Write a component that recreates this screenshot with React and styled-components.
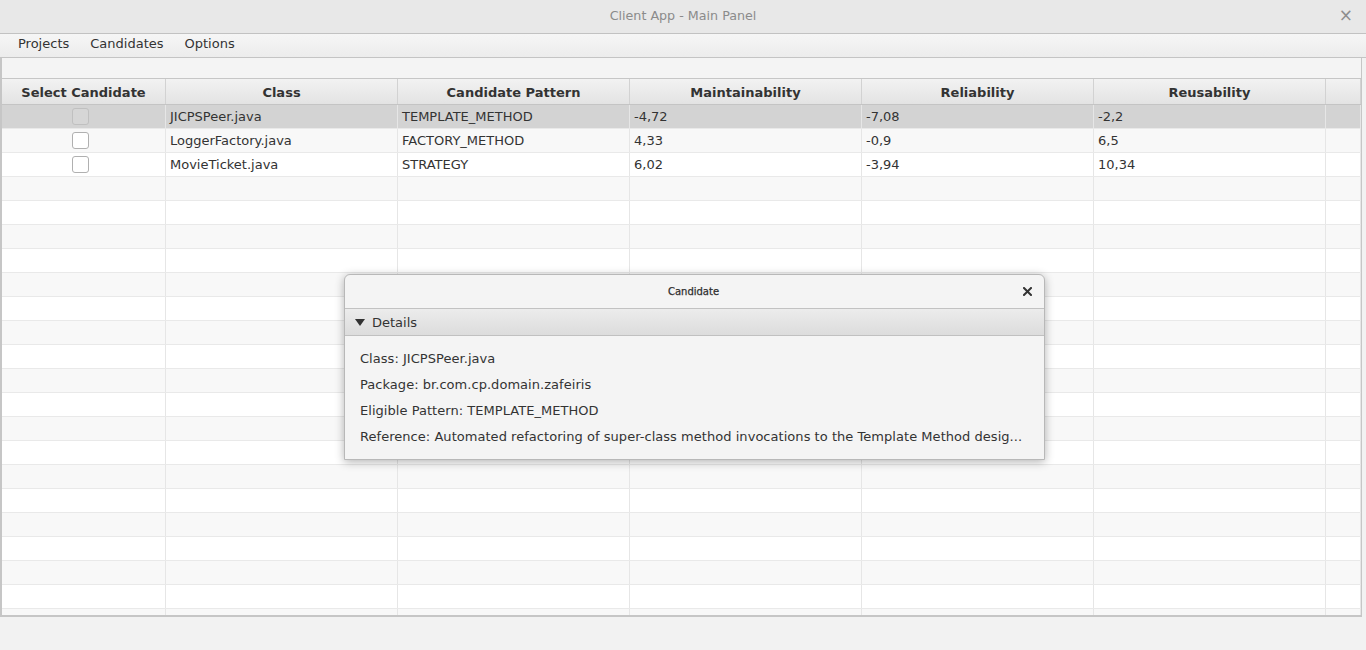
import React from 'react';
import styled, { createGlobalStyle } from 'styled-components';

const GlobalStyle = createGlobalStyle`
  html, body { margin: 0; padding: 0; }
  body {
    font-family: "DejaVu Sans", "Liberation Sans", sans-serif;
    background: #f2f2f2;
    overflow: hidden;
  }
`;

const columns = [
  { title: 'Select Candidate', width: 164 },
  { title: 'Class', width: 232 },
  { title: 'Candidate Pattern', width: 232 },
  { title: 'Maintainability', width: 232 },
  { title: 'Reliability', width: 232 },
  { title: 'Reusability', width: 232 },
];

const rows = [
  ['JICPSPeer.java', 'TEMPLATE_METHOD', '-4,72', '-7,08', '-2,2'],
  ['LoggerFactory.java', 'FACTORY_METHOD', '4,33', '-0,9', '6,5'],
  ['MovieTicket.java', 'STRATEGY', '6,02', '-3,94', '10,34'],
];

const details = [
  'Class: JICPSPeer.java',
  'Package: br.com.cp.domain.zafeiris',
  'Eligible Pattern: TEMPLATE_METHOD',
  'Reference: Automated refactoring of super-class method invocations to the Template Method desig...',
];

export default function App() {
  const bodyRows = Array.from({ length: 22 }, (_, i) => rows[i] || null);
  return (
    <>
      <GlobalStyle />
      <Window>
        <TitleBar>
          <Title>Client App - Main Panel</Title>
          <WinClose>×</WinClose>
        </TitleBar>
        <MenuBar>
          <MenuItem>Projects</MenuItem>
          <MenuItem>Candidates</MenuItem>
          <MenuItem>Options</MenuItem>
        </MenuBar>
        <Content>
          <Spacer />
          <Table>
            <HeaderRow>
              {columns.map((c) => (
                <HeadCell key={c.title} $w={c.width}>{c.title}</HeadCell>
              ))}
              <HeadFiller />
            </HeaderRow>
            <Body>
              {bodyRows.map((r, i) => (
                <Row key={i} $odd={i % 2 === 1} $selected={i === 0}>
                  <Cell $w={columns[0].width} $center>
                    {r && <CheckBox $selected={i === 0} />}
                  </Cell>
                  {columns.slice(1).map((c, j) => (
                    <Cell key={c.title} $w={c.width}>{r ? r[j] : ''}</Cell>
                  ))}
                  <Filler />
                </Row>
              ))}
            </Body>
          </Table>
        </Content>
        <Footer />

        <Dialog>
          <DialogTitle>
            <DialogName>Candidate</DialogName>
            <DialogClose width="9" height="9" viewBox="0 0 9 9">
              <path d="M1 1 L8 8 M8 1 L1 8" stroke="#333" strokeWidth="2" strokeLinecap="square" />
            </DialogClose>
          </DialogTitle>
          <DetailsHeader>
            <Arrow />
            Details
          </DetailsHeader>
          <DetailsBody>
            {details.map((d) => (
              <DetailLine key={d}>{d}</DetailLine>
            ))}
          </DetailsBody>
        </Dialog>
      </Window>
    </>
  );
}

const Window = styled.div`
  position: relative;
  width: 1366px;
  height: 650px;
  display: flex;
  flex-direction: column;
  background: #f2f2f2;
  color: #333;
`;

const TitleBar = styled.div`
  height: 33px;
  flex: none;
  display: flex;
  align-items: center;
  justify-content: center;
  position: relative;
  background: #e8e8e8;
  border-bottom: 1px solid #c2c2c2;
`;

const Title = styled.div`
  font-size: 12.7px;
  color: #8b8b8b;
  margin-top: -2px;
`;

const WinClose = styled.div`
  position: absolute;
  right: 13px;
  top: 5px;
  font-size: 17px;
  color: #8e8e8e;
`;

const MenuBar = styled.div`
  height: 24px;
  flex: none;
  display: flex;
  align-items: center;
  padding-left: 8px;
  padding-bottom: 5px;
  box-sizing: border-box;
  background: linear-gradient(#f6f6f6, #ececec);
  border-bottom: 1px solid #c4c4c4;
`;

const MenuItem = styled.div`
  font-size: 13px;
  color: #333;
  padding: 0 10px;
  &:nth-child(2) { margin-left: 1px; }
  &:nth-child(3) { margin-left: 1px; }
`;

const Content = styled.div`
  height: 559px;
  flex: none;
  display: flex;
  flex-direction: column;
  width: 1362px;
  box-sizing: border-box;
  border-left: 2px solid #c6c6c6;
  border-right: 1px solid #c6c6c6;
  border-bottom: 2px solid #c6c6c6;
  overflow: hidden;
  background: #fff;
`;

const Spacer = styled.div`
  height: 20px;
  flex: none;
  background: #f4f4f4;
  border-bottom: 1px solid #c6c6c6;
`;

const Table = styled.div`
  flex: 1;
  display: flex;
  flex-direction: column;
  overflow: hidden;
`;

const HeaderRow = styled.div`
  display: flex;
  height: 26px;
  flex: none;
  background: linear-gradient(#f2f2f2, #e3e3e3);
  border-bottom: 1px solid #c4c4c4;
  box-sizing: border-box;
`;

const HeadCell = styled.div`
  width: ${(p) => p.$w}px;
  flex: none;
  display: flex;
  align-items: center;
  justify-content: center;
  padding-top: 1px;
  font-size: 13px;
  font-weight: bold;
  color: #333;
  border-right: 1px solid #d2d2d2;
  box-sizing: border-box;
`;

const HeadFiller = styled.div`
  flex: 1;
  border-right: 1px solid #d2d2d2;
`;

const Body = styled.div`
  flex: 1;
  overflow: hidden;
`;

const Row = styled.div`
  display: flex;
  height: 24px;
  box-sizing: border-box;
  border-bottom: 1px solid #e9e9e9;
  background: ${(p) => (p.$selected ? '#d3d3d3' : p.$odd ? '#f8f8f8' : '#ffffff')};
`;

const Cell = styled.div`
  width: ${(p) => p.$w}px;
  flex: none;
  box-sizing: border-box;
  display: flex;
  align-items: center;
  justify-content: ${(p) => (p.$center ? 'center' : 'flex-start')};
  padding-left: ${(p) => (p.$center ? '0' : '4px')};
  padding-right: ${(p) => (p.$center ? '6px' : '0')};
  font-size: 13px;
  color: #333;
  border-right: 1px solid #e6e6e6;
  white-space: nowrap;
`;

const Filler = styled.div`
  flex: 1;
  border-right: 1px solid #e6e6e6;
`;

const CheckBox = styled.div`
  width: 17px;
  height: 17px;
  box-sizing: border-box;
  border-radius: 3px;
  border: 1px solid ${(p) => (p.$selected ? '#c0c0c0' : '#b0b0b0')};
  background: ${(p) => (p.$selected ? '#d6d6d6' : '#ffffff')};
`;

const Footer = styled.div`
  flex: 1;
  background: #f2f2f2;
`;

const Dialog = styled.div`
  position: absolute;
  left: 344px;
  top: 274px;
  width: 701px;
  height: 186px;
  box-sizing: border-box;
  background: #f4f4f4;
  border: 1px solid #b8b8b8;
  border-radius: 6px 6px 0 0;
  box-shadow: 0 2px 10px rgba(0, 0, 0, 0.3);
  display: flex;
  flex-direction: column;
  overflow: hidden;
`;

const DialogTitle = styled.div`
  height: 34px;
  flex: none;
  display: flex;
  align-items: center;
  justify-content: center;
  position: relative;
  box-sizing: border-box;
  border-bottom: 1px solid #c2c2c2;
`;

const DialogName = styled.div`
  font-size: 10px;
  color: #2e2e2e;
  -webkit-text-stroke: 0.25px #2e2e2e;
  margin-left: -2px;
`;

const DialogClose = styled.svg`
  position: absolute;
  right: 12px;
  top: 12px;
`;

const DetailsHeader = styled.div`
  height: 27px;
  flex: none;
  display: flex;
  align-items: center;
  padding-left: 10px;
  gap: 7px;
  font-size: 13px;
  color: #333;
  background: linear-gradient(#ececec, #dcdcdc);
  border-bottom: 1px solid #c0c0c0;
  box-sizing: border-box;
`;

const Arrow = styled.span`
  width: 0;
  height: 0;
  border-left: 5px solid transparent;
  border-right: 5px solid transparent;
  border-top: 7px solid #333;
`;

const DetailsBody = styled.div`
  padding: 13px 15px 0;
  display: flex;
  flex-direction: column;
`;

const DetailLine = styled.div`
  height: 26px;
  font-size: 13px;
  letter-spacing: 0.04px;
  color: #333;
  line-height: 20px;
  white-space: nowrap;
`;
